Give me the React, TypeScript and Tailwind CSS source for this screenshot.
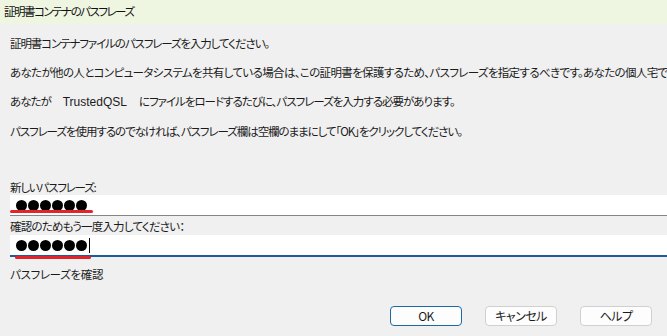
import React from 'react';

const jp = "font-['Yu_Gothic_UI','Noto_Sans_CJK_JP',sans-serif] [font-feature-settings:'palt']";

function Dots({ caret }: { caret?: boolean }) {
  return (
    <div className="flex items-center gap-[1px] pl-[6px]">
      {[0, 1, 2, 3, 4, 5].map((i) => (
        <span key={i} className="block w-[11px] h-[11px] rounded-full bg-black" />
      ))}
      {caret && <span className="block w-[1px] h-[15px] bg-black ml-[1px]" />}
    </div>
  );
}

function Btn({ label, primary }: { label: string; primary?: boolean }) {
  return (
    <button
      className={`w-[72px] h-[20px] rounded-[4px] bg-[#fdfdfd] text-[12px] tracking-[-0.5px] text-[#1b1b1b] border ${
        primary ? 'border-[#1b6aa8]' : 'border-[#d0d0d0]'
      }`}
    >
      {label}
    </button>
  );
}

export default function App() {
  return (
    <div className={`w-[667px] h-[336px] overflow-hidden bg-[#f0f0f0] text-[#1b1b1b] text-[11.5px] flex flex-col ${jp}`}>
      {/* title bar */}
      <div className="h-[24px] shrink-0 bg-[#eef6e1] flex items-center pl-[4px] text-[11.5px] tracking-[-1.5px] text-[#111]">
        証明書コンテナのパスフレーズ
      </div>

      {/* message lines */}
      <div className="pl-[10px] flex flex-col gap-[12px] pt-[11px] whitespace-nowrap leading-[17px]">
        <p className="tracking-[-1.1px]">証明書コンテナファイルのパスフレーズを入力してください。</p>
        <p className="tracking-[-0.65px]">
          あなたが他の人とコンピュータシステムを共有している場合は、この証明書を保護するため、パスフレーズを指定するべきです。あなたの個人宅でコンピュータを使用している場合は、パスフレーズは不要です。
        </p>
        <p className="tracking-[-1px]">
          あなたが
          <span className="font-['Segoe_UI','Liberation_Sans',sans-serif] px-[12px] text-[12px] tracking-normal">TrustedQSL</span>
          にファイルをロードするたびに、パスフレーズを入力する必要があります。
        </p>
        <p className="tracking-[-1.05px]">パスフレーズを使用するのでなければ、パスフレーズ欄は空欄のままにして「OK」をクリックしてください。</p>
      </div>

      {/* fields */}
      <div className="pl-[10px] pt-[40px] flex flex-col">
        <div className="leading-[14px] tracking-[-1.2px]">新しいパスフレーズ:</div>
        <div className="relative mt-[1px] h-[21px] bg-white border-b border-[#868686] flex items-center">
          <Dots />
          <span className="absolute left-0 top-[15px] w-[83px] h-[3px] rounded-full bg-[#e3222a]" />
        </div>
        <div className="leading-[14px] mt-[3px] tracking-[-0.8px]">確認のためもう一度入力してください：</div>
        <div className="relative mt-[2px] h-[22px] bg-white border-b-2 border-[#1d5c96] flex items-center">
          <Dots caret />
          <span className="absolute left-[5px] top-[21px] w-[76px] h-[3px] rounded-full bg-[#e3222a]" />
        </div>
        <div className="mt-[10px] leading-[14px] tracking-[-0.3px]">パスフレーズを確認</div>
      </div>

      {/* buttons */}
      <div className="mt-auto mb-[10px] flex justify-end gap-[23px] pr-[15px]">
        <Btn label="OK" primary />
        <Btn label="キャンセル" />
        <Btn label="ヘルプ" />
      </div>
    </div>
  );
}
